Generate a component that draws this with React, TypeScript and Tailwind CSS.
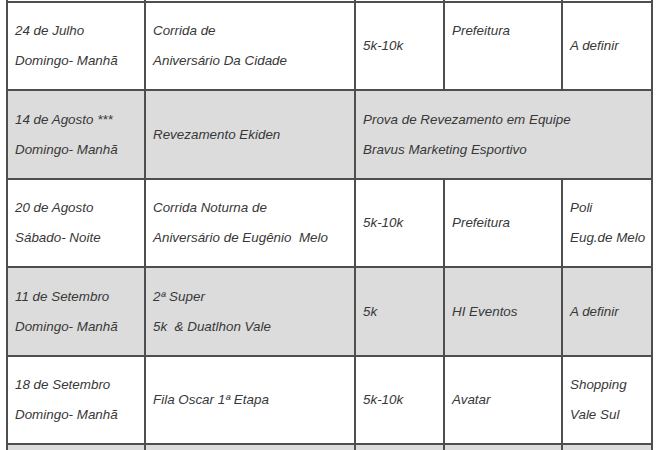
type Row = {
  shaded: boolean
  cells: { lines: string[]; span?: number }[]
}

const rows: Row[] = [
  {
    shaded: false,
    cells: [
      { lines: ["24 de Julho", "Domingo- Manhã"] },
      { lines: ["Corrida de", "Aniversário Da Cidade"] },
      { lines: ["5k-10k"] },
      { lines: ["Prefeitura", ""] },
      { lines: ["A definir"] },
    ],
  },
  {
    shaded: true,
    cells: [
      { lines: ["14 de Agosto ***", "Domingo- Manhã"] },
      { lines: ["Revezamento Ekiden"] },
      { lines: ["Prova de Revezamento em Equipe", "Bravus Marketing Esportivo"], span: 3 },
    ],
  },
  {
    shaded: false,
    cells: [
      { lines: ["20 de Agosto", "Sábado- Noite"] },
      { lines: ["Corrida Noturna de", "Aniversário de Eugênio\u00a0 Melo"] },
      { lines: ["5k-10k"] },
      { lines: ["Prefeitura"] },
      { lines: ["Poli", "Eug.de Melo"] },
    ],
  },
  {
    shaded: true,
    cells: [
      { lines: ["11 de Setembro", "Domingo- Manhã"] },
      { lines: ["2ª Super", "5k\u00a0 & Duatlhon Vale"] },
      { lines: ["5k"] },
      { lines: ["HI Eventos"] },
      { lines: ["A definir"] },
    ],
  },
  {
    shaded: false,
    cells: [
      { lines: ["18 de Setembro", "Domingo- Manhã"] },
      { lines: ["Fila Oscar 1ª Etapa"] },
      { lines: ["5k-10k"] },
      { lines: ["Avatar"] },
      { lines: ["Shopping", "Vale Sul"] },
    ],
  },
]

const heights = ["h-[86px]", "h-[87px]", "h-[86px]", "h-[87px]", "h-[86px]"]

function Cell({ lines, span, shaded, height }: { lines: string[]; span?: number; shaded: boolean; height: string }) {
  return (
    <div
      className={`${height} ${shaded ? "bg-[#dcdcdc]" : "bg-white"} ${
        span === 3 ? "col-span-3" : ""
      } flex flex-col justify-center pl-[7px]`}
    >
      {lines.map((line, i) => (
        <div key={i} className="h-[30px] leading-[30px] whitespace-nowrap">
          {line}
        </div>
      ))}
    </div>
  )
}

export default function App() {
  return (
    <div className="w-[660px] h-[450px] overflow-hidden bg-white">
      <div
        className="ml-[6px] w-[647px] grid grid-cols-[136px_208px_87px_116px_88px] gap-[2px] px-[2px] bg-[#4e4e4e] italic text-[13.4px] text-[#383838]"
        style={{ fontFamily: '"Liberation Sans", Arial, sans-serif' }}
      >
        {/* tail of the previous row */}
        {[0, 1, 2, 3, 4].map((i) => (
          <div key={i} className="h-[1px] bg-white" />
        ))}
        {rows.map((row, r) =>
          row.cells.map((cell, c) => (
            <Cell key={`${r}-${c}`} lines={cell.lines} span={cell.span} shaded={row.shaded} height={heights[r]} />
          ))
        )}
        {/* start of the next row */}
        {[0, 1, 2, 3, 4].map((i) => (
          <div key={`n${i}`} className="h-[20px] bg-[#dcdcdc]" />
        ))}
      </div>
    </div>
  )
}
